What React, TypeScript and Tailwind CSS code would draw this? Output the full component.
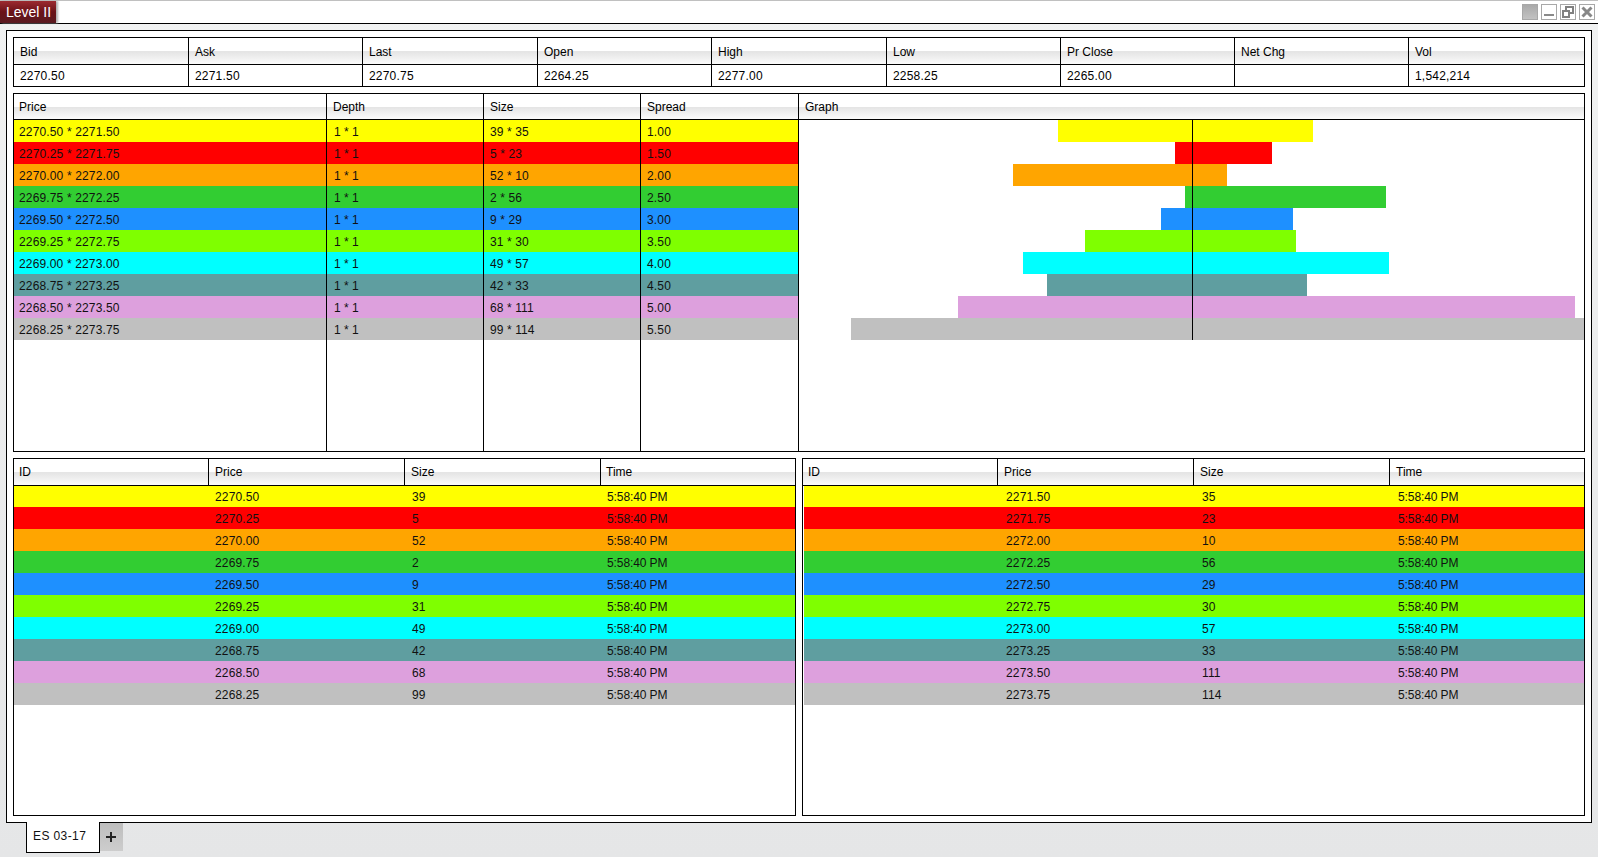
const FONT = "font-['Liberation_Sans',Arial,sans-serif]";

const rows = [
  { bg: "bg-[#ffff00]", fill: "#ffff00", bid: "2270.50", ask: "2271.50", bs: "39", as: "35", spread: "1.00", x1: 1058, x2: 1313 },
  { bg: "bg-[#ff0000]", fill: "#ff0000", bid: "2270.25", ask: "2271.75", bs: "5", as: "23", spread: "1.50", x1: 1175, x2: 1272 },
  { bg: "bg-[#ffa500]", fill: "#ffa500", bid: "2270.00", ask: "2272.00", bs: "52", as: "10", spread: "2.00", x1: 1013, x2: 1227 },
  { bg: "bg-[#32cd32]", fill: "#32cd32", bid: "2269.75", ask: "2272.25", bs: "2", as: "56", spread: "2.50", x1: 1185, x2: 1386 },
  { bg: "bg-[#1e90ff]", fill: "#1e90ff", bid: "2269.50", ask: "2272.50", bs: "9", as: "29", spread: "3.00", x1: 1161, x2: 1293 },
  { bg: "bg-[#7fff00]", fill: "#7fff00", bid: "2269.25", ask: "2272.75", bs: "31", as: "30", spread: "3.50", x1: 1085, x2: 1296 },
  { bg: "bg-[#00ffff]", fill: "#00ffff", bid: "2269.00", ask: "2273.00", bs: "49", as: "57", spread: "4.00", x1: 1023, x2: 1389 },
  { bg: "bg-[#5f9ea0]", fill: "#5f9ea0", bid: "2268.75", ask: "2273.25", bs: "42", as: "33", spread: "4.50", x1: 1047, x2: 1307 },
  { bg: "bg-[#dda0dd]", fill: "#dda0dd", bid: "2268.50", ask: "2273.50", bs: "68", as: "111", spread: "5.00", x1: 958, x2: 1575 },
  { bg: "bg-[#c0c0c0]", fill: "#c0c0c0", bid: "2268.25", ask: "2273.75", bs: "99", as: "114", spread: "5.50", x1: 851, x2: 1584 },
];

const quote = [
  ["Bid", "2270.50"], ["Ask", "2271.50"], ["Last", "2270.75"], ["Open", "2264.25"], ["High", "2277.00"],
  ["Low", "2258.25"], ["Pr Close", "2265.00"], ["Net Chg", ""], ["Vol", "1,542,214"],
];

const headBg = "bg-[linear-gradient(to_bottom,#ffffff_0%,#ffffff_50%,#e4e4e4_52%,#fbfbfb_100%)]";

function HeadCell({ label, last, pl, lead }: { label: string; last?: boolean; pl: string; lead: string }) {
  return (
    <div className={`${headBg} ${pl} ${lead} ${last ? "" : "border-r border-black"} h-full overflow-hidden whitespace-nowrap`}>
      {label}
    </div>
  );
}

function QuoteTable() {
  return (
    <div className="border border-black h-[50px] shrink-0">
      <div className="grid grid-cols-[175px_174px_175px_174px_175px_174px_174px_174px_175px] h-[27px] border-b border-black">
        {quote.map(([l], i) => (
          <HeadCell key={l} label={l} last={i === 8} pl="pl-[6px]" lead="leading-[28px]" />
        ))}
      </div>
      <div className="grid grid-cols-[175px_174px_175px_174px_175px_174px_174px_174px_175px] h-[21px]">
        {quote.map(([l, v], i) => (
          <div key={l} className={`h-[21px] pl-[6px] leading-[23px] tracking-[0.2px] ${i === 8 ? "" : "border-r border-black"}`}>{v}</div>
        ))}
      </div>
    </div>
  );
}

function DepthColumn({ label, values, width, pl, vpl }: { label: string; values: string[]; width: string; pl: string; vpl: string }) {
  return (
    <div className={`${width} border-r border-black flex flex-col`}>
      <div className={`${headBg} ${pl} h-[26px] shrink-0 border-b border-black leading-[27px]`}>{label}</div>
      {values.map((v, i) => (
        <div key={i} className={`${rows[i].bg} ${vpl} h-[22px] shrink-0 leading-[24px] text-[#111]`}>{v}</div>
      ))}
    </div>
  );
}

function DepthTable() {
  return (
    <div className="border border-black h-[359px] shrink-0 flex">
      <DepthColumn label="Price" width="w-[313px]" pl="pl-[5px]" vpl="pl-[5px] tracking-[0.15px]" values={rows.map((r) => `${r.bid} * ${r.ask}`)} />
      <DepthColumn label="Depth" width="w-[157px]" pl="pl-[6px]" vpl="pl-[7px]" values={rows.map(() => "1 * 1")} />
      <DepthColumn label="Size" width="w-[157px]" pl="pl-[6px]" vpl="pl-[6px] tracking-[0.1px]" values={rows.map((r) => `${r.bs} * ${r.as}`)} />
      <DepthColumn label="Spread" width="w-[158px]" pl="pl-[6px]" vpl="pl-[6px] tracking-[0.15px]" values={rows.map((r) => r.spread)} />
      <div className="flex-1 flex flex-col min-w-0">
        <div className={`${headBg} pl-[6px] h-[26px] shrink-0 border-b border-black leading-[27px]`}>Graph</div>
        <svg width="785" height="220" viewBox="799 120 785 220" shapeRendering="crispEdges" className="block">
          {rows.map((r, i) => (
            <rect key={i} x={r.x1} y={120 + i * 22} width={r.x2 - r.x1} height={22} fill={r.fill} />
          ))}
          <rect x={1192} y={120} width={1} height={220} fill="#000" />
        </svg>
      </div>
    </div>
  );
}

function SideTable({ side }: { side: "bid" | "ask" }) {
  const ask = side === "ask";
  return (
    <div className="border border-black flex-1 min-w-0 h-[358px] flex flex-col">
      <div className="grid grid-cols-[195px_196px_196px_194px] h-[26px] shrink-0">
        <HeadCell label="ID" pl="pl-[5px]" lead="leading-[27px]" />
        <HeadCell label="Price" pl="pl-[6px]" lead="leading-[27px]" />
        <HeadCell label="Size" pl="pl-[6px]" lead="leading-[27px]" />
        <HeadCell label="Time" last pl={ask ? "pl-[6px]" : "pl-[5px]"} lead="leading-[27px]" />
      </div>
      <div className="h-px bg-black shrink-0" />
      {rows.map((r, i) => {
        const price = ask ? r.ask : r.bid;
        const size = ask ? r.as : r.bs;
        return (
          <div
            key={i}
            className={`${r.bg} ${ask ? "ml-px" : ""} ${i === 0 ? "h-[21px] leading-[23px]" : "h-[22px] leading-[24px]"} shrink-0 grid ${ask ? "grid-cols-[194px_196px_196px_194px]" : "grid-cols-[195px_196px_196px_194px]"} text-[#111]`}
          >
            <div />
            <div className={`tracking-[0.15px] ${ask ? "pl-[8px]" : "pl-[6px]"}`}>{price}</div>
            <div className={`tracking-[0.1px] ${ask ? "pl-[8px]" : "pl-[7px]"}`}>{size}</div>
            <div className={`tracking-[-0.1px] ${ask ? "pl-[8px]" : "pl-[6px]"}`}>5:58:40 PM</div>
          </div>
        );
      })}
    </div>
  );
}

function WinButton({ children, filled }: { children?: React.ReactNode; filled?: boolean }) {
  return (
    <div
      className={`w-4 h-4 border border-[#a8a8a8] flex items-center justify-center ${filled ? "bg-[linear-gradient(to_bottom,#a9a9a9,#c2c2c2)]" : "bg-white"}`}
    >
      {children}
    </div>
  );
}

export default function App() {
  return (
    <div className={`${FONT} w-[1598px] h-[857px] overflow-hidden text-[12px] text-black flex flex-col bg-[linear-gradient(to_bottom,#f1f2f2,#e5e6e7)]`}>
      <div className="h-[24px] shrink-0 bg-white border-t border-[#c0c0c0] border-b-[1px] border-b-black flex items-stretch justify-between">
        <div className="w-[56px] h-[22px] text-[14px] leading-[23px] text-white pl-[6px] bg-[linear-gradient(to_bottom,#9c2a30,#6a1218_50%,#5a1a20)] shadow-[2px_0_2px_#b0b0b0]">
          Level II
        </div>
        <div className="flex items-start gap-[3px] pt-[3px] pr-[3px]">
          <WinButton filled />
          <WinButton>
            <svg width="14" height="14" viewBox="0 0 14 14" shapeRendering="crispEdges">
              <rect x="2" y="9" width="10" height="2" fill="#8a8a8a" />
            </svg>
          </WinButton>
          <WinButton>
            <svg width="14" height="14" viewBox="0 0 14 14" shapeRendering="crispEdges" fill="none" stroke="#808080" strokeWidth="2">
              <rect x="5" y="2" width="7" height="6" />
              <rect x="2" y="6" width="6" height="6" fill="#fff" />
            </svg>
          </WinButton>
          <WinButton>
            <svg width="14" height="14" viewBox="0 0 14 14" fill="none" stroke="#888888" strokeWidth="3">
              <path d="M2.5 2.5 L11.5 11.5 M11.5 2.5 L2.5 11.5" />
            </svg>
          </WinButton>
        </div>
      </div>

      <div className="mx-[6px] mt-[6px] h-[793px] shrink-0 border border-black bg-white p-[6px] flex flex-col gap-[6px]">
        <QuoteTable />
        <DepthTable />
        <div className="flex gap-[6px]">
          <SideTable side="bid" />
          <SideTable side="ask" />
        </div>
      </div>

      <div className="flex items-start pl-[26px] -mt-px">
        <div className="w-[74px] h-[31px] bg-white border border-t-0 border-black pl-[6px] leading-[28px] tracking-[0.4px] text-[#111]">
          ES 03-17
        </div>
        <div className="w-[23px] h-[28px] mt-px bg-[linear-gradient(to_bottom,#bdbdbd,#cdcdcd)] flex items-center justify-center">
          <svg width="11" height="11" viewBox="0 0 11 11" shapeRendering="crispEdges">
            <rect x="0" y="4" width="10" height="2" fill="#222" />
            <rect x="4" y="0" width="2" height="10" fill="#222" />
          </svg>
        </div>
      </div>
    </div>
  );
}
